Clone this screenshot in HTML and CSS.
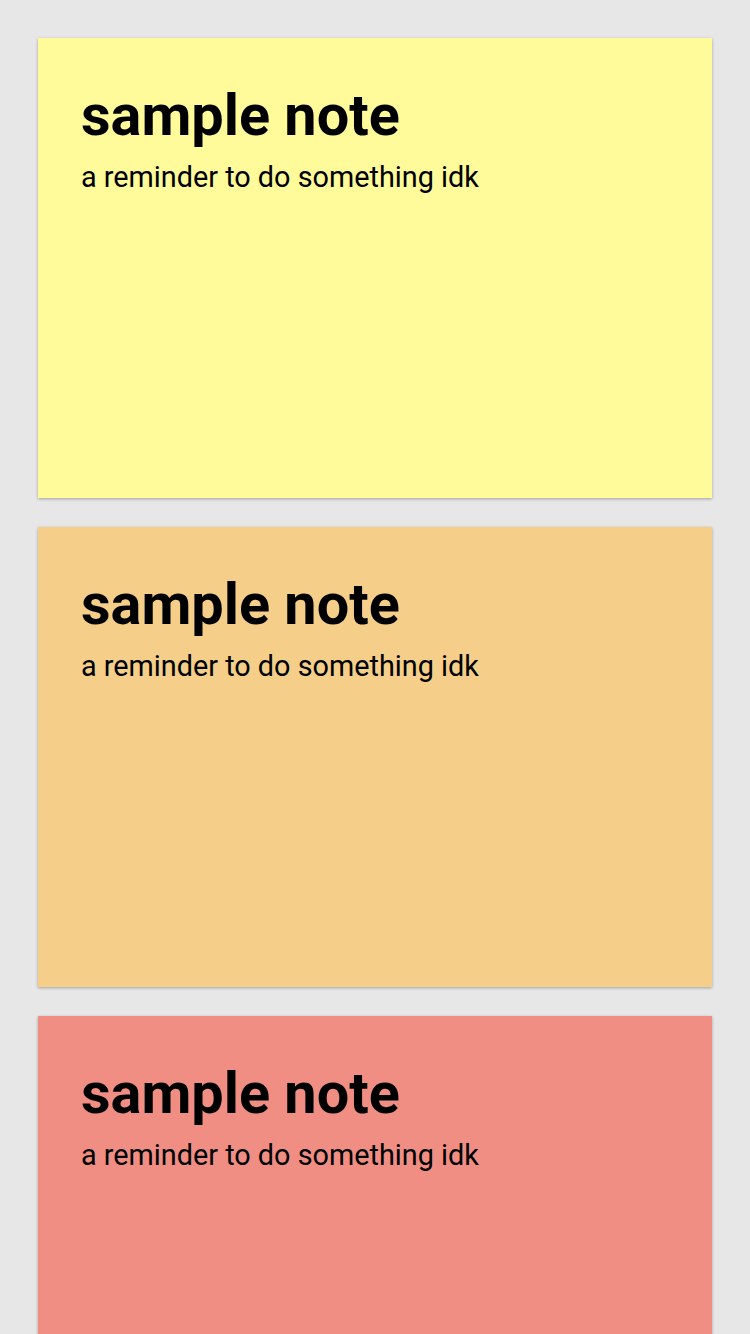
FILE: index.html
```html
<!DOCTYPE html>
<html>
<head>
<meta charset="utf-8">
<link rel="stylesheet" href="styles.css">
</head>
<body>
<main class="notes">
  <section class="note note-yellow">
    <h1 class="note-title">sample note</h1>
    <p class="note-text">a reminder to do something idk</p>
  </section>
  <section class="note note-orange">
    <h1 class="note-title">sample note</h1>
    <p class="note-text">a reminder to do something idk</p>
  </section>
  <section class="note note-red">
    <h1 class="note-title">sample note</h1>
    <p class="note-text">a reminder to do something idk</p>
  </section>
</main>
</body>
</html>
```
FILE: styles.css
```css
html, body {
  margin: 0;
  padding: 0;
  background: #e7e7e7;
  font-family: Roboto, "Liberation Sans", sans-serif;
  color: #000;
}
.notes {
  display: flex;
  flex-direction: column;
  gap: 29.5px;
  padding: 38px;
}
.note {
  height: 459.5px;
  box-sizing: border-box;
  padding: 44px 43px;
  box-shadow: 0 1px 3px rgba(0,0,0,0.3);
  flex-shrink: 0;
}
.note-yellow { background: #fffb9b; }
.note-orange { background: #f5cf89; }
.note-red { background: #f08e84; }
.note-title {
  margin: 0;
  font-size: 57.6px;
  font-weight: 700;
  line-height: normal;
}
.note-text {
  margin: 11px 0 0;
  font-size: 28.8px;
  line-height: normal;
}
```
